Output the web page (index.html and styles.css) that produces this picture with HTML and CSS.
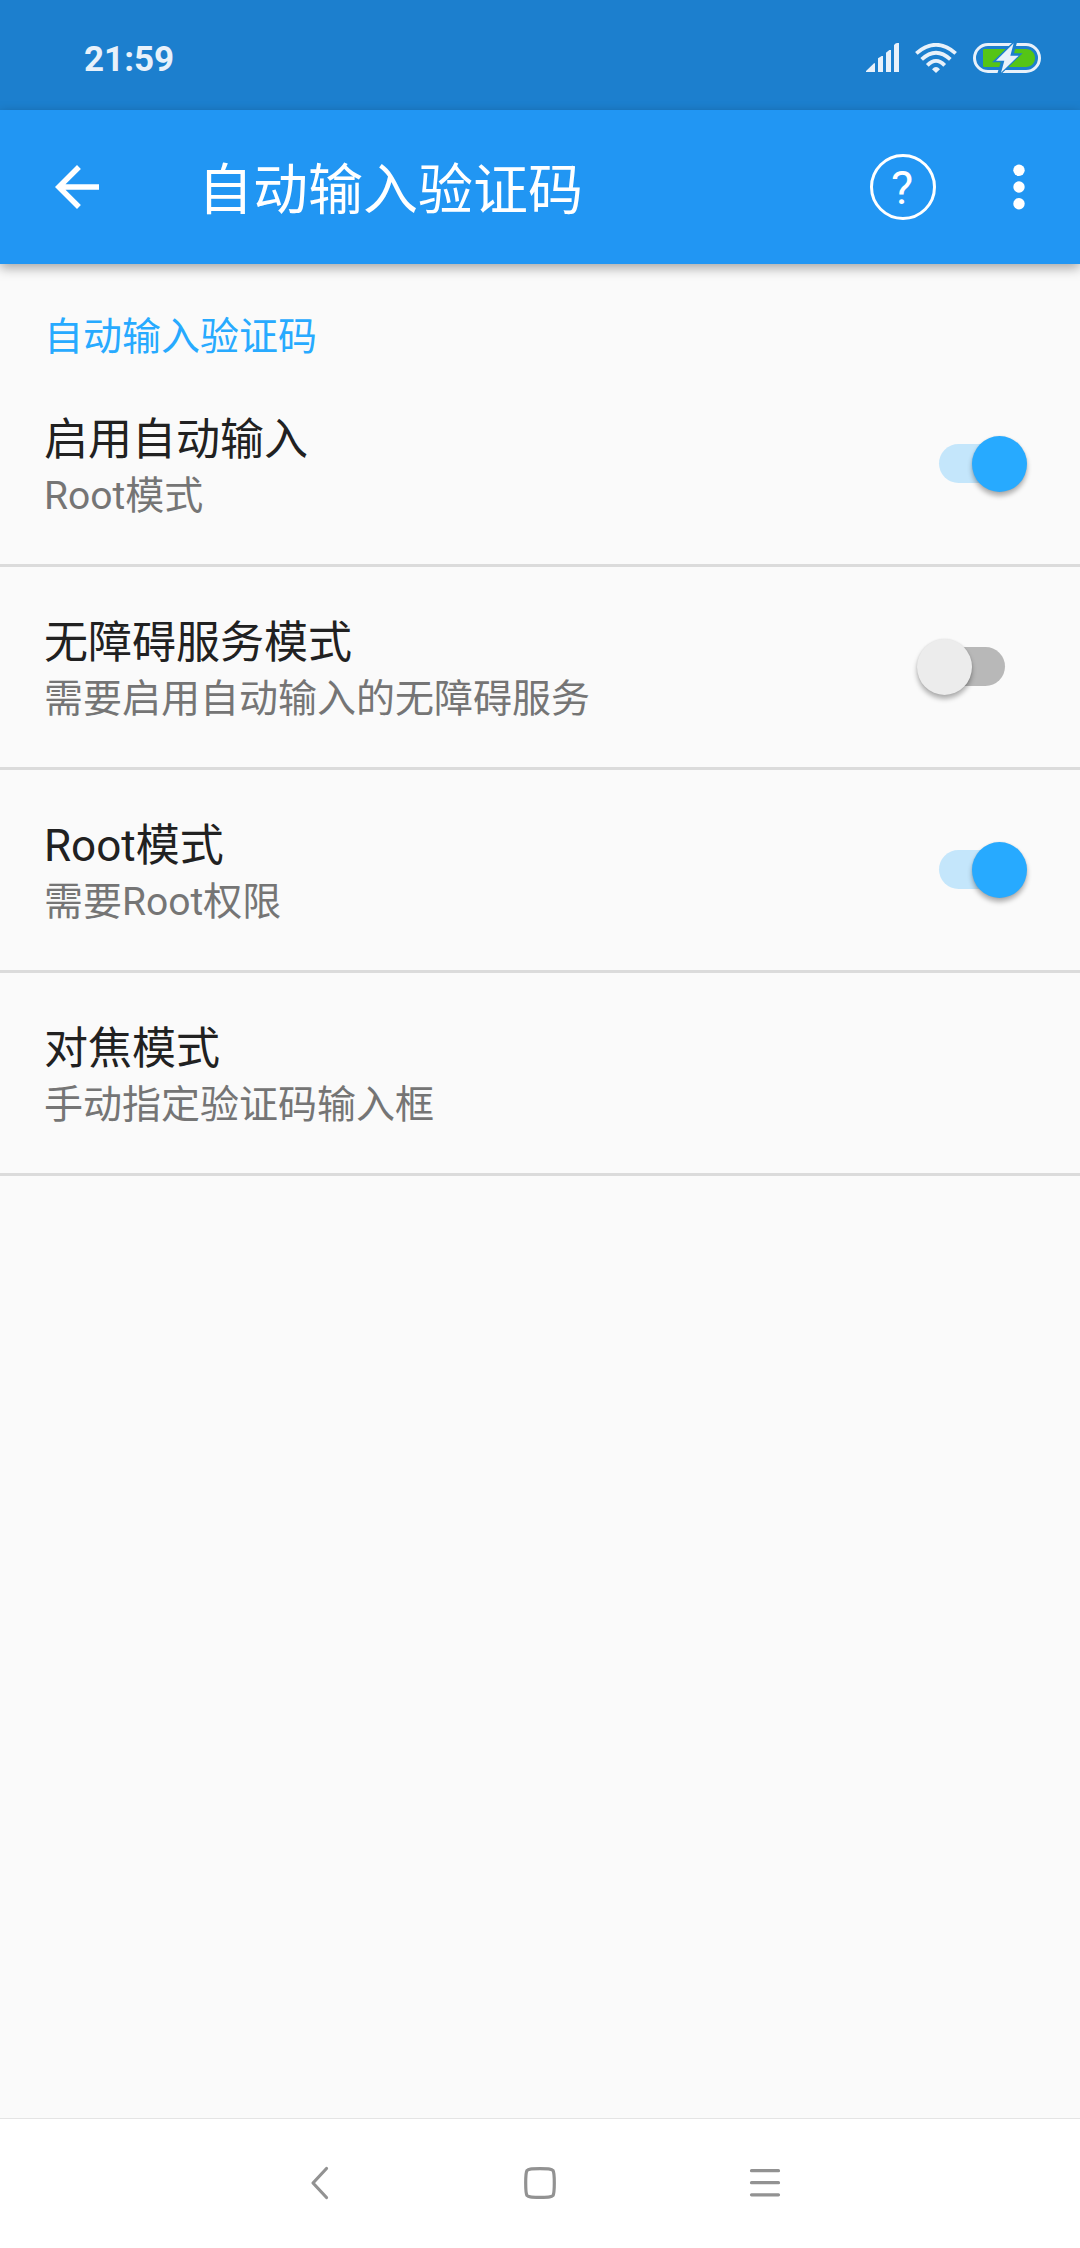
FILE: index.html
```html
<!DOCTYPE html>
<html lang="zh-CN">
<head>
<meta charset="utf-8">
<title>自动输入验证码</title>
<link rel="stylesheet" href="styles.css">
</head>
<body>
<div class="screen">
  <div class="status-bar">
    <span class="clock">21:59</span>
    <div class="status-icons">
      <svg class="signal" viewBox="0 0 99 90" width="33" height="30">
        <path d="M0 87V84L24 61H27V87Z M36 46L47 39H51V87H36Z M60 29L70 21H75V87H60Z M84 7Q86 1 93 0H99V87H84Z"/>
      </svg>
      <svg class="wifi" viewBox="0 0 126 90" width="42" height="30">
        <g fill="none" stroke-width="11.5">
          <path d="M4 31Q63 -20 122 31"/>
          <path d="M20 49Q63 9 106 49"/>
          <path d="M37 67Q63 40 89 67"/>
        </g>
        <path d="M51 79Q63 65 75 79L63 90Z"/>
      </svg>
      <svg class="battery" viewBox="0 0 204 90" width="68" height="30">
        <rect class="battery-shell" x="4.5" y="4.5" width="195" height="81" rx="40.5"/>
        <path class="battery-charge" d="M34 18H158C175 18 186 30 186 45S175 72 158 72H34Q30 72 30 68V22Q30 18 34 18Z"/>
        <path class="bolt-gap" d="M119 -2L57 58H83L73 92H86L149 31H123L132 -2Z"/>
        <path class="bolt" d="M122 1L69 53H94L84 89L137 38H112Z"/>
      </svg>
    </div>
  </div>

  <header class="app-bar">
    <svg class="back" viewBox="0 0 24 24" width="66" height="66"><path d="M20 11H7.83l5.59-5.59L12 4l-8 8 8 8 1.41-1.41L7.83 13H20v-2z"/></svg>
    <h1 class="title">自动输入验证码</h1>
    <span class="help">?</span>
    <svg class="more" viewBox="0 0 12 46" width="12" height="46"><circle cx="6" cy="6.3" r="5.7"/><circle cx="6" cy="23" r="5.7"/><circle cx="6" cy="39.7" r="5.7"/></svg>
  </header>

  <main class="settings">
    <h2 class="category">自动输入验证码</h2>
    <div class="row">
      <div class="labels"><div class="name">启用自动输入</div><div class="summary">Root模式</div></div>
      <div class="switch on"><span class="thumb"></span></div>
    </div>
    <div class="row">
      <div class="labels"><div class="name">无障碍服务模式</div><div class="summary">需要启用自动输入的无障碍服务</div></div>
      <div class="switch"><span class="thumb"></span></div>
    </div>
    <div class="row">
      <div class="labels"><div class="name">Root模式</div><div class="summary">需要Root权限</div></div>
      <div class="switch on"><span class="thumb"></span></div>
    </div>
    <div class="row">
      <div class="labels"><div class="name">对焦模式</div><div class="summary">手动指定验证码输入框</div></div>
    </div>
  </main>

  <nav class="nav-bar">
    <svg viewBox="0 0 36 36" width="36" height="36"><path d="M25.5 3.5L12 18L25.5 32.5"/></svg>
    <svg class="home" viewBox="0 0 36 36" width="36" height="36"><path d="M18 3.6C28 3.6 29.6 4 31 5.5C32 7 32.3 9 32.3 18S32 29 31 30.5C29.6 32 28 32.4 18 32.4S6.4 32 5 30.5C4 29 3.7 27 3.7 18S4 7 5 5.5C6.4 4 8 3.6 18 3.6Z"/></svg>
    <svg viewBox="0 0 36 36" width="36" height="36"><path d="M4.5 5.7H31.5M4.5 17.7H31.5M4.5 29.8H31.5"/></svg>
  </nav>
</div>
</body>
</html>
```
FILE: styles.css
```css
* {
  box-sizing: border-box;
}

body {
  margin: 0;
  font-family: Roboto, "Noto Sans CJK SC", sans-serif;
  background: #fafafa;
}

.screen {
  display: flex;
  flex-direction: column;
  width: 1080px;
  height: 2248px;
  overflow: hidden;
}

/* Status bar */
.status-bar {
  display: flex;
  flex: none;
  align-items: center;
  justify-content: space-between;
  height: 110px;
  padding: 6px 39px 0 84px;
  background: #1c7fce;
}

.clock {
  margin-top: 3px;
  color: #e8f1fa;
  font-size: 35px;
  font-weight: 700;
  line-height: 40px;
}

.status-icons {
  display: flex;
  align-items: center;
  gap: 16px;
  fill: #e8f1fa;
}

.status-icons svg {
  display: block;
}

.wifi g {
  stroke: #e8f1fa;
}

.battery-shell {
  fill: none;
  stroke: #e8f1fa;
  stroke-width: 9;
}

.battery-charge {
  fill: #55c516;
}

.bolt-gap {
  fill: #1c7fce;
}

/* App bar */
.app-bar {
  position: relative;
  display: flex;
  flex: none;
  align-items: center;
  height: 154px;
  padding: 0 55px 0 44px;
  background: #2196f3;
  box-shadow: 0 4px 11px rgba(0, 0, 0, 0.34);
  color: #fff;
  fill: #fff;
}

.title {
  flex: 1;
  margin: 5px 0 0 88px;
  font-size: 55px;
  font-weight: 400;
  line-height: 66px;
}

.help {
  width: 66px;
  height: 66px;
  margin-right: 77px;
  padding-right: 2px;
  border: 3px solid #fff;
  border-radius: 50%;
  font-size: 47px;
  font-weight: 400;
  line-height: 61px;
  text-align: center;
}

/* Settings list */
.settings {
  flex: 1;
}

.category {
  height: 100px;
  margin: 0;
  padding: 44px 44px 0;
  color: #27aaff;
  font-size: 39px;
  font-weight: 400;
  line-height: 58px;
}

.row {
  display: flex;
  justify-content: space-between;
  height: 203px;
  padding: 50px 53px 0 44px;
  border-bottom: 3px solid #dbdbdb;
}

.name {
  color: #212121;
  font-size: 44px;
  line-height: 52px;
}

.summary {
  margin-top: 1px;
  color: #757575;
  font-size: 39px;
  line-height: 58px;
}

.switch {
  position: relative;
  width: 66px;
  height: 39px;
  margin: 30px 22px 0 0;
  border-radius: 20px;
  background: #b8b8b8;
}

.thumb {
  position: absolute;
  top: -8px;
  left: -22px;
  width: 55px;
  height: 56px;
  border-radius: 50%;
  background: #ececec;
  box-shadow: 0 4px 5px rgba(0, 0, 0, 0.3), 0 0 2px rgba(0, 0, 0, 0.1);
}

.switch.on {
  background: #c4e6fb;
}

.switch.on .thumb {
  left: 33px;
  background: #27aaff;
}

/* Navigation bar */
.nav-bar {
  display: flex;
  flex: none;
  justify-content: space-between;
  height: 130px;
  padding: 46px 297px 0 301px;
  border-top: 1px solid #e4e4e4;
  background: #fff;
}

.nav-bar svg {
  fill: none;
  stroke: #929292;
  stroke-width: 3.2;
  stroke-linecap: round;
  stroke-linejoin: round;
}

.nav-bar .home {
  margin-right: 4px;
}
```
